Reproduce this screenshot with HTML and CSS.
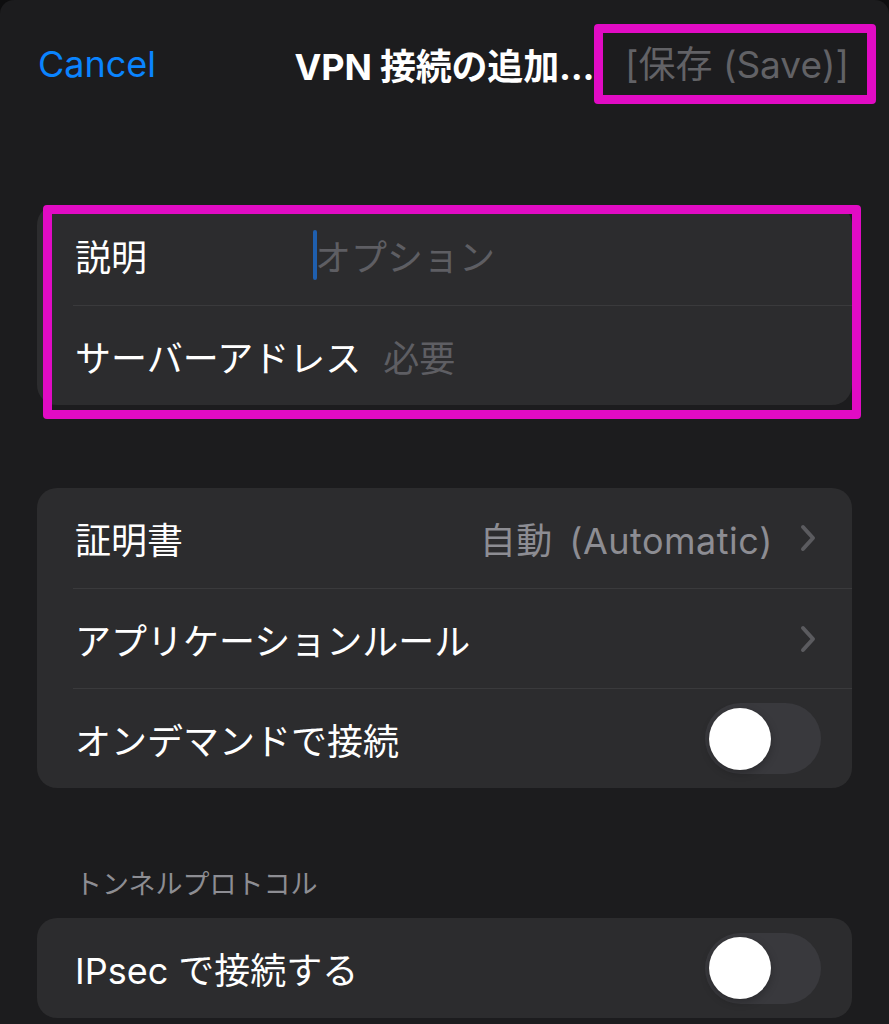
FILE: index.html
```html
<!DOCTYPE html>
<html lang="ja">
<head>
    <meta charset="UTF-8">
    <meta name="viewport" content="width=device-width, initial-scale=1.0">
    <title>VPN 接続の追加</title>
    <link rel="stylesheet" href="styles.css">
</head>
<body>
    <div class="sheet">
        <header class="nav-bar">
            <button class="nav-cancel">Cancel</button>
            <h1 class="nav-title">VPN 接続の追加...</h1>
            <button class="nav-save" disabled>[保存 (Save)]</button>
        </header>

        <div class="group-wrap marked">
            <div class="group">
                <div class="row">
                    <span class="field-label">説明</span>
                    <span class="field-input"><span class="caret"></span><span class="placeholder">オプション</span></span>
                </div>
                <div class="row">
                    <span class="field-label">サーバーアドレス</span>
                    <span class="field-input"><span class="placeholder">必要</span></span>
                </div>
            </div>
        </div>

        <div class="group-wrap">
            <div class="group">
                <div class="row">
                    <span class="row-title">証明書</span>
                    <span class="row-value">自動 (Automatic)</span>
                    <svg class="chevron" width="16" height="28" viewBox="0 0 16 28">
                        <path d="M3 3 L13 14 L3 25" fill="none" stroke="currentColor" stroke-width="4" stroke-linecap="round" stroke-linejoin="round"/>
                    </svg>
                </div>
                <div class="row">
                    <span class="row-title">アプリケーションルール</span>
                    <svg class="chevron" width="16" height="28" viewBox="0 0 16 28">
                        <path d="M3 3 L13 14 L3 25" fill="none" stroke="currentColor" stroke-width="4" stroke-linecap="round" stroke-linejoin="round"/>
                    </svg>
                </div>
                <div class="row">
                    <span class="row-title">オンデマンドで接続</span>
                    <span class="switch"><span class="knob"></span></span>
                </div>
            </div>
        </div>

        <div class="section-header">トンネルプロトコル</div>

        <div class="group-wrap">
            <div class="group">
                <div class="row">
                    <span class="row-title">IPsec で接続する</span>
                    <span class="switch"><span class="knob"></span></span>
                </div>
            </div>
        </div>
    </div>
</body>
</html>
```

FILE: styles.css
```css
:root {
    --bg: #1c1c1e;
    --card: #2c2c2e;
    --separator: #3a3a3c;
    --blue: #0a84ff;
    --secondary: #8d8d93;
    --placeholder: #5e5e63;
    --mark: #e10bc4;
}

* {
    margin: 0;
    padding: 0;
    box-sizing: border-box;
}

html {
    background-color: #0e0e0f;
}

body {
    font-family: "Inter", "Noto Sans CJK JP", sans-serif;
    color: #ffffff;
    font-size: 36px;
}

.sheet {
    min-height: 100vh;
    background-color: var(--bg);
    border-radius: 14px 14px 0 0;
    overflow: hidden;
}

/* navigation bar */
.nav-bar {
    height: 128px;
    display: grid;
    grid-template-columns: minmax(0, 1fr) auto minmax(0, 1fr);
    align-items: center;
}

.nav-bar button {
    background: none;
    border: none;
    font-family: inherit;
    font-size: 36px;
}

.nav-cancel {
    justify-self: start;
    margin-left: 38px;
    color: var(--blue);
}

.nav-title {
    font-size: 36px;
    font-weight: 700;
    letter-spacing: -0.2px;
    white-space: nowrap;
}

.nav-save {
    justify-self: end;
    margin-right: 13px;
    width: 282px;
    height: 80px;
    border: 9px solid var(--mark) !important;
    border-radius: 4px;
    color: #626266;
    font-size: 37px !important;
    padding: 0 8px 4px 12px;
    white-space: nowrap;
}

/* grouped rows */
.group-wrap {
    margin: 0 37px;
    position: relative;
}

.group-wrap + .group-wrap {
    margin-top: 83px;
}

.nav-bar + .group-wrap {
    margin-top: 77px;
}

.group {
    background-color: var(--card);
    border-radius: 20px;
    padding-left: 36px;
    overflow: hidden;
}

.marked::after {
    content: "";
    position: absolute;
    top: 0;
    bottom: -14px;
    left: 6px;
    right: -9px;
    border: 9px solid var(--mark);
    border-radius: 4px;
    pointer-events: none;
}

.row {
    height: 100px;
    display: flex;
    align-items: center;
    padding: 0 31px 0 2px;
}

.row + .row {
    border-top: 1px solid var(--separator);
}

.field-label {
    min-width: 216px;
    margin-right: 22px;
    white-space: nowrap;
}

.field-input {
    display: flex;
    align-items: center;
}

.caret {
    width: 4px;
    height: 50px;
    border-radius: 2px;
    background-color: #1f5fae;
    margin-right: -2px;
}

.placeholder {
    color: var(--placeholder);
}

.row-title {
    flex: 1;
    white-space: nowrap;
}

.row-value {
    color: var(--secondary);
    margin-right: 27px;
    word-spacing: 6px;
    letter-spacing: 0.5px;
}

.chevron {
    color: #5b5b5f;
    margin-right: 5px;
}

/* toggle, off state */
.switch {
    width: 116px;
    height: 71px;
    border-radius: 36px;
    background-color: #39393d;
    padding: 4px;
    display: flex;
    align-items: center;
}

.knob {
    width: 62px;
    height: 62px;
    border-radius: 50%;
    background-color: #ffffff;
    box-shadow: 0 3px 8px rgba(0, 0, 0, 0.25), 0 0 1px rgba(0, 0, 0, 0.2);
}

.section-header {
    margin: 80px 0 16px 75px;
    font-size: 27px;
    line-height: 34px;
    color: var(--secondary);
}
```
